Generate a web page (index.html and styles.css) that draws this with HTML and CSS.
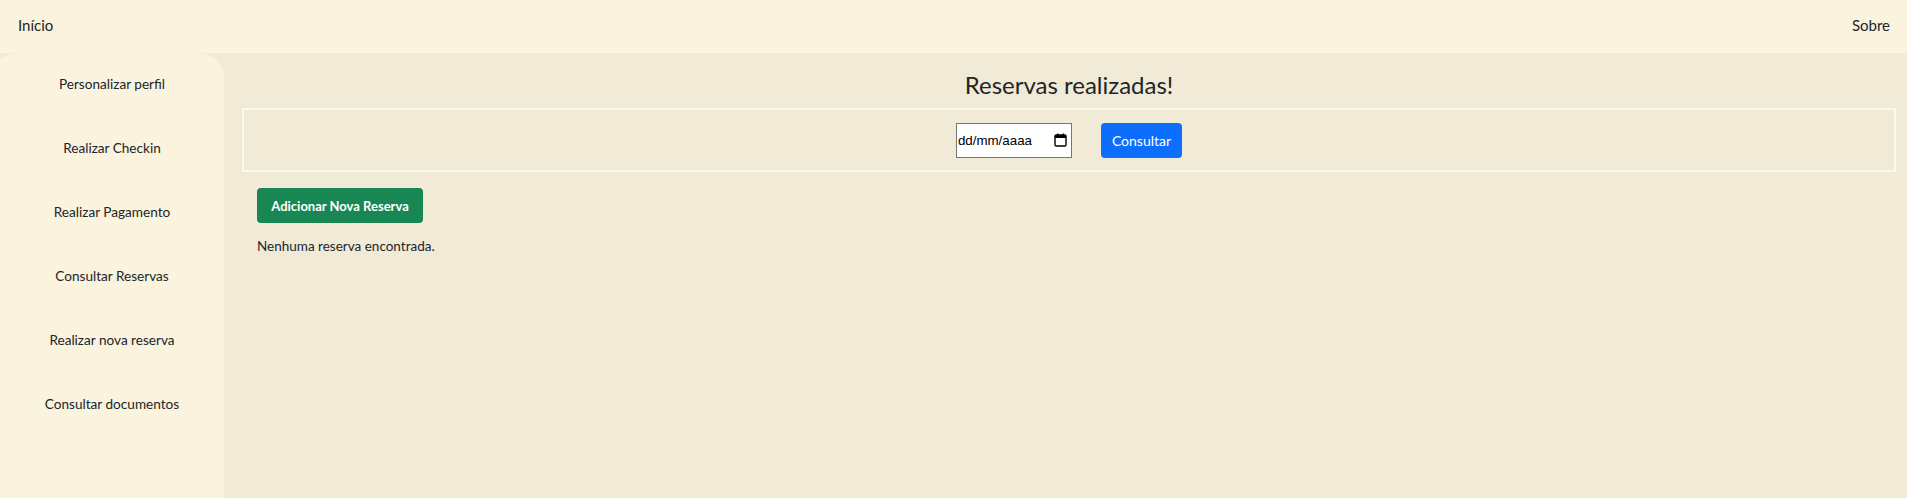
FILE: index.html
```html
<!DOCTYPE html>
<html lang="pt-BR">
<head>
<meta charset="utf-8">
<title>Reservas</title>
<link rel="stylesheet" href="styles.css">
</head>
<body>
<header class="topbar">
  <a class="toplink" href="#">Início</a>
  <a class="toplink" href="#">Sobre</a>
</header>
<div class="layout">
  <nav class="sidebar">
    <a class="side-item" href="#">Personalizar perfil</a>
    <a class="side-item" href="#">Realizar Checkin</a>
    <a class="side-item" href="#">Realizar Pagamento</a>
    <a class="side-item" href="#">Consultar Reservas</a>
    <a class="side-item" href="#">Realizar nova reserva</a>
    <a class="side-item" href="#">Consultar documentos</a>
  </nav>
  <main class="main">
    <h1 class="title">Reservas realizadas!</h1>
    <form class="filter">
      <div class="date-box">
        <span class="date-text">dd/mm/aaaa</span>
        <svg class="cal" width="13" height="14" viewBox="0 0 13 14" aria-hidden="true">
          <rect x="1" y="2" width="11" height="11" rx="1.2" fill="none" stroke="#000" stroke-width="1.4"/>
          <rect x="1" y="2" width="11" height="3" fill="#000"/>
          <rect x="3" y="0.5" width="1.4" height="2.5" fill="#000"/>
          <rect x="8.6" y="0.5" width="1.4" height="2.5" fill="#000"/>
        </svg>
      </div>
      <button type="button" class="btn btn-blue">Consultar</button>
    </form>
    <div class="actions">
      <button type="button" class="btn btn-green">Adicionar Nova Reserva</button>
    </div>
    <p class="empty">Nenhuma reserva encontrada.</p>
  </main>
</div>
</body>
</html>
```

FILE: styles.css
```css
* { box-sizing: border-box; }
html, body { margin: 0; padding: 0; }
body {
  font-family: "Lato", "Noto Sans", sans-serif;
  color: #212529;
  background: #f1ead6;
  height: 498px;
  overflow: hidden;
}
.topbar {
  height: 53px;
  background: #faf3de;
  display: flex;
  justify-content: space-between;
  align-items: center;
  padding: 0 17px 4px 18px;
}
.toplink {
  color: #212529;
  text-decoration: none;
  font-size: 15px;
}
.layout {
  display: flex;
  height: 445px;
}
.sidebar {
  width: 232px;
  margin-left: -8px;
  flex: none;
  background: #faf3de;
  border-radius: 25px 25px 0 0;
  display: flex;
  flex-direction: column;
  padding-top: 20px;
  padding-left: 8px;
}
.side-item {
  height: 64px;
  line-height: 22px;
  text-align: center;
  color: #212529;
  text-decoration: none;
  font-size: 13.6px;
}
.main {
  flex: 1;
  padding: 0 11px 0 18px;
  display: flex;
  flex-direction: column;
}
.title {
  margin: 17px 0 0;
  height: 38px;
  font-size: 24px;
  font-weight: 400;
  text-align: center;
  line-height: 30px;
}
.filter {
  height: 64px;
  border: 2px solid #fbf8f0;
  display: flex;
  justify-content: center;
  align-items: center;
  gap: 29px;
}
.date-box {
  width: 116px;
  height: 35px;
  background: #fff;
  border: 1px solid #767676;
  display: flex;
  align-items: center;
  justify-content: space-between;
  padding: 0 3px 0 1px;
  font-family: "Liberation Sans", Arial, sans-serif;
  font-size: 13.33px;
  color: #000;
}
.cal { margin-right: 1px; }
.btn {
  height: 35px;
  border: 0;
  border-radius: 4px;
  color: #fff;
  font-family: "Lato", "Noto Sans", sans-serif;
  font-size: 14px;
  padding: 0 11px;
  white-space: nowrap;
  cursor: pointer;
}
.btn-blue {
  background: #0d6efd;
  min-width: 81px;
}
.btn-green {
  background: #198754;
  font-weight: 700;
  font-size: 13px;
  padding: 0 9px;
  min-width: 166px;
}
.actions {
  margin: 16px 0 0 15px;
}
.empty {
  margin: 15px 0 0 15px;
  font-size: 13.5px;
}
```
